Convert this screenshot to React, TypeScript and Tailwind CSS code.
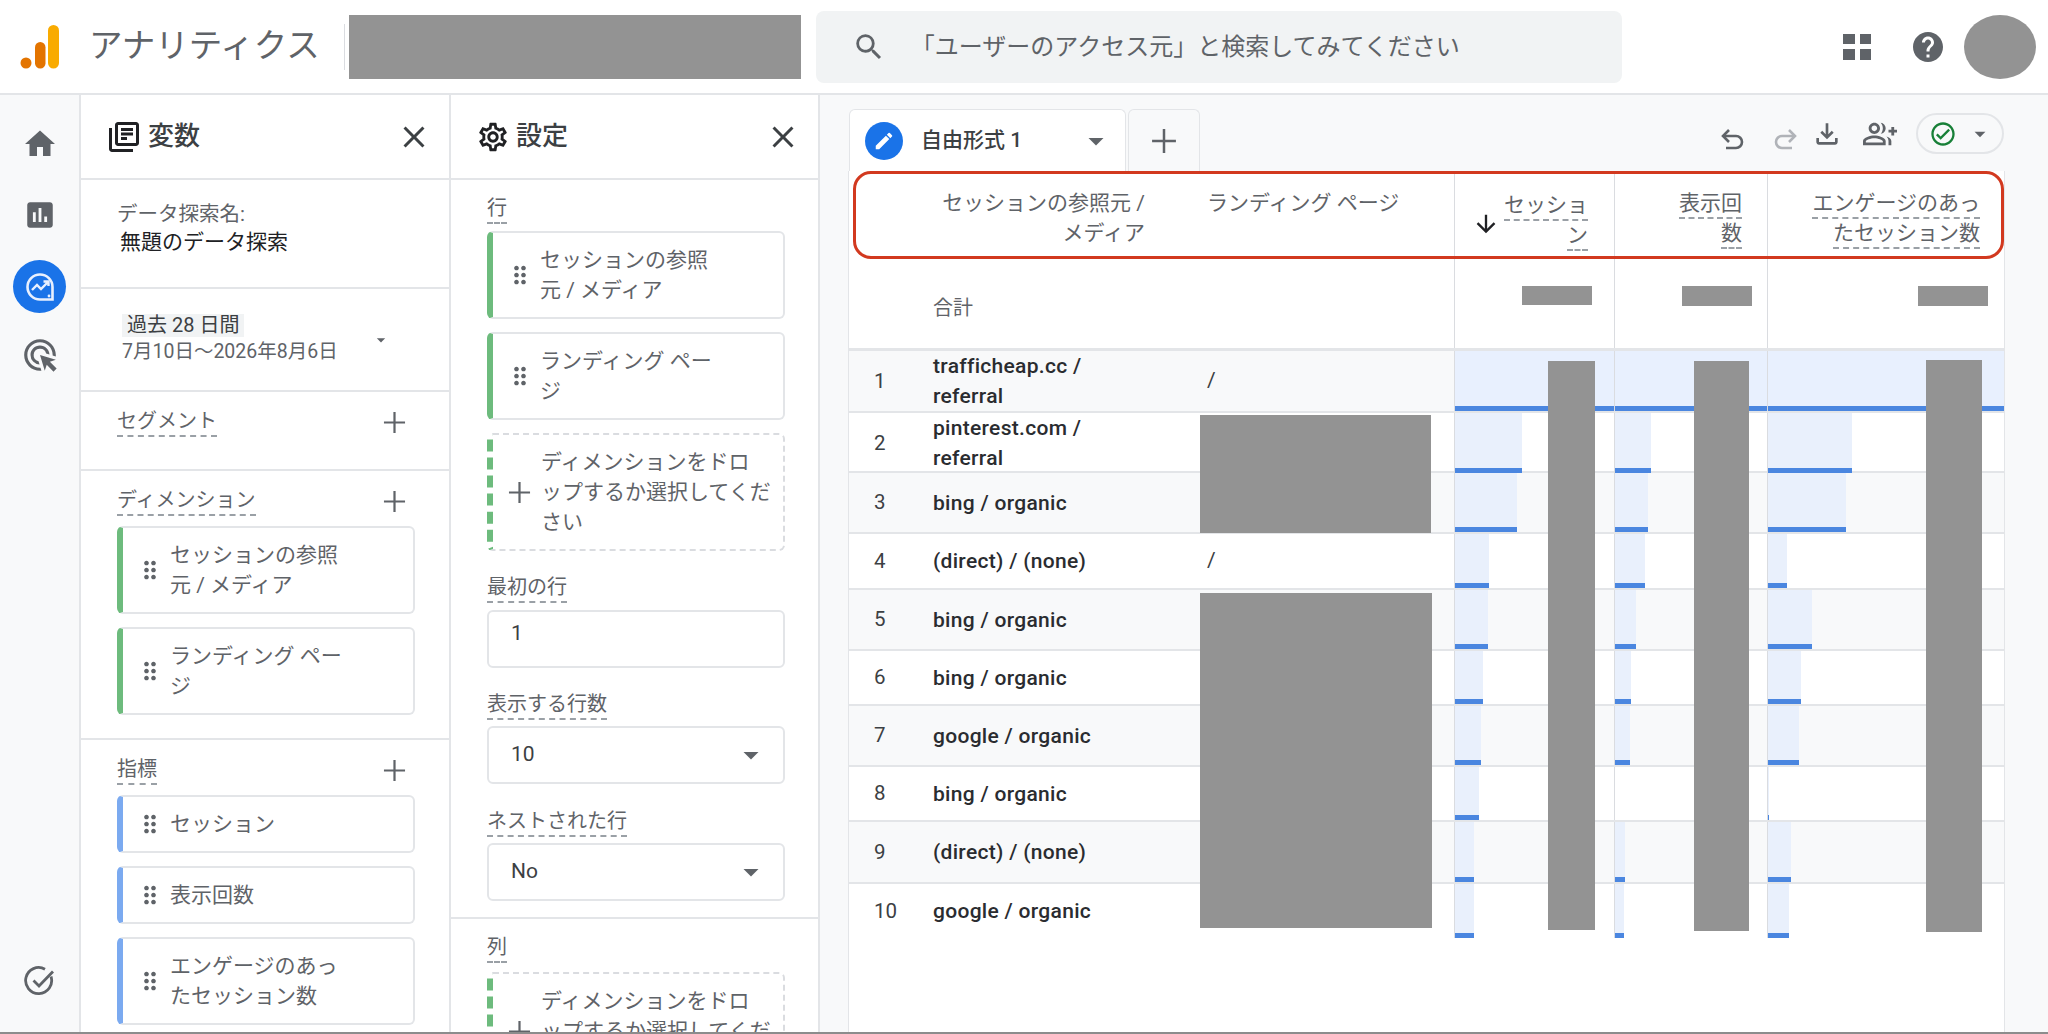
import type { ReactNode } from 'react'
import {
  MdAdsClick,
  MdArrowDownward,
  MdArrowDropDown,
  MdAssessment,
  MdClose,
  MdDragIndicator,
  MdEdit,
  MdHelp,
  MdHome,
  MdOutlineCheckCircle,
  MdOutlineFileDownload,
  MdOutlineGroupAdd,
  MdOutlineLibraryBooks,
  MdOutlineSettings,
  MdSearch
} from 'react-icons/md'

interface Row {
  no: number
  source: ReactNode
  landing?: string
  height: string
  bars: [number, number, number]
}

const ROWS: Row[] = [
  { no: 1, source: <>trafficheap.cc /<br />referral</>, landing: '/', height: 'h-[62px]', bars: [160, 153, 236] },
  { no: 2, source: <>pinterest.com /<br />referral</>, height: 'h-[60px]', bars: [67, 36, 84] },
  { no: 3, source: 'bing / organic', height: 'h-[61px]', bars: [62, 33, 78] },
  { no: 4, source: '(direct) / (none)', landing: '/', height: 'h-[56px]', bars: [34, 30, 19] },
  { no: 5, source: 'bing / organic', height: 'h-[61px]', bars: [33, 21, 44] },
  { no: 6, source: 'bing / organic', height: 'h-[55px]', bars: [28, 16, 33] },
  { no: 7, source: 'google / organic', height: 'h-[61px]', bars: [26, 15, 31] },
  { no: 8, source: 'bing / organic', height: 'h-[55px]', bars: [24, 0, 1] },
  { no: 9, source: '(direct) / (none)', height: 'h-[62px]', bars: [19, 10, 23] },
  { no: 10, source: 'google / organic', height: 'h-[54px]', bars: [19, 9, 21] }
]

const GRID = 'grid grid-cols-[76px_275px_254px_160px_153px_237px]'

function Logo() {
  return (
    <svg width="40" height="44" viewBox="0 0 40 44" className="ml-[20px] shrink-0">
      <circle cx="6" cy="38" r="5.5" fill="#e37400" />
      <rect x="15" y="17" width="10.5" height="26.5" rx="5.2" fill="#e37400" />
      <rect x="28" y="0" width="11" height="43.5" rx="5.5" fill="#f9ab00" />
    </svg>
  )
}

function ExploreIcon() {
  return (
    <div className="w-[53px] h-[53px] rounded-full bg-[#1a73e8] flex items-center justify-center">
      <svg width="32" height="32" viewBox="0 0 32 32" fill="none" stroke="#e8f0fe" strokeWidth="2.6">
        <path d="M16 3.5a12.5 12.5 0 1 0 0 25h12.5V16A12.5 12.5 0 0 0 16 3.5z" />
        <path d="M8 19l5-5 4 4 7-7M19.5 10.5H24.5V15" strokeWidth="2.4" />
        <circle cx="25" cy="25" r="1.4" fill="#e8f0fe" stroke="none" />
      </svg>
    </div>
  )
}

function CheckIcon() {
  return (
    <svg width="32" height="32" viewBox="0 0 32 32" fill="none" stroke="#5f6368" strokeWidth="2.8">
      <path d="M27 11.5A13 13 0 1 1 21 4.2" />
      <path d="M9.5 15.5l5.5 5.5L29 6.5" />
    </svg>
  )
}

function AppsIcon() {
  return (
    <div className="grid grid-cols-2 gap-[5px] w-[28px] h-[26px]">
      <div className="bg-[#5f6368]" />
      <div className="bg-[#5f6368]" />
      <div className="bg-[#5f6368]" />
      <div className="bg-[#5f6368]" />
    </div>
  )
}

function UndoIcon({ className }: { className: string }) {
  return (
    <svg width="28" height="28" viewBox="0 0 28 28" fill="none" stroke="currentColor" strokeWidth="2.6" className={className}>
      <path d="M11 4L5 10l6 6" />
      <path d="M5 10h13a5.5 5.5 0 0 1 0 12H8" />
    </svg>
  )
}

function Plus({ size, className }: { size: number; className?: string }) {
  return (
    <svg width={size} height={size} viewBox="0 0 24 24" fill="none" stroke="#5f6368" strokeWidth="2.3" className={className}>
      <path d="M12 1v22M1 12h22" />
    </svg>
  )
}

function Label({ children }: { children: ReactNode }) {
  return (
    <span className="inline-block text-[20px] leading-[28px] text-[#5f6368] border-b-2 border-dashed border-[#9aa0a6]">
      {children}
    </span>
  )
}

function SectionHead({ label }: { label: string }) {
  return (
    <div className="flex items-start justify-between pr-[27px]">
      <Label>{label}</Label>
      <Plus size={23} className="mt-[4px]" />
    </div>
  )
}

function Chip({ color, height, children }: { color: string; height: string; children: ReactNode }) {
  return (
    <div className={`flex items-center w-[298px] ${height} rounded-[6px] bg-white border-2 border-[#e3e5e8] border-l-[6px] ${color}`}>
      <MdDragIndicator className="text-[28px] text-[#5f6368] ml-[13px] shrink-0" />
      <div className="ml-[6px] text-[21px] leading-[30px] text-[#5f6368]">{children}</div>
    </div>
  )
}

function DropZone({ height }: { height: string }) {
  return (
    <div className={`flex items-center w-[298px] ${height} shrink-0 rounded-[6px] border-2 border-dashed border-[#dadce0] border-l-[6px] border-l-[#6dbb7d]`}>
      <Plus size={23} className="ml-[15px] shrink-0" />
      <div className="ml-[10px] text-[21px] leading-[30px] text-[#5f6368] whitespace-nowrap">
        ディメンションをドロ<br />ップするか選択してくだ<br />さい
      </div>
    </div>
  )
}

function Select({ value }: { value: string }) {
  return (
    <div className="flex items-center justify-between w-[298px] h-[58px] rounded-[6px] border-2 border-[#e3e5e8] bg-white pl-[22px] pr-[14px] text-[21px] text-[#3c4043]">
      {value}
      <MdArrowDropDown className="text-[36px] text-[#5f6368]" />
    </div>
  )
}

function Variables() {
  return (
    <div className="w-[370px] shrink-0 border-r-2 border-[#e3e5e8] bg-white overflow-hidden">
      <div className="h-[85px] flex items-center justify-between pl-[25px] pr-[17px] border-b-2 border-[#e3e5e8]">
        <div className="flex items-center gap-[6px] text-[26px] font-medium text-[#3c4043]">
          <MdOutlineLibraryBooks className="text-[36px] text-[#202124]" />
          変数
        </div>
        <MdClose className="text-[36px] text-[#3c4043]" />
      </div>
      <div className="h-[109px] pt-[20px] pl-[36px] border-b-2 border-[#e3e5e8]">
        <div className="text-[20.5px] leading-[28px] text-[#5f6368]">データ探索名:</div>
        <div className="text-[21px] leading-[28px] text-[#202124] ml-[3px]">無題のデータ探索</div>
      </div>
      <div className="h-[103px] flex items-center justify-between pl-[41px] pr-[58px] border-b-2 border-[#e3e5e8]">
        <div>
          <div className="w-fit px-[5px] bg-[#f1f3f4] text-[20px] leading-[23px] text-[#3c4043]">過去 28 日間</div>
          <div className="text-[19.5px] leading-[28px] text-[#5f6368] mt-[1px]">7月10日〜2026年8月6日</div>
        </div>
        <MdArrowDropDown className="text-[20px] text-[#5f6368]" />
      </div>
      <div className="h-[79px] pt-[15px] pl-[36px] pr-[16px] border-b-2 border-[#e3e5e8]">
        <SectionHead label="セグメント" />
      </div>
      <div className="h-[269px] pt-[15px] pl-[36px] pr-[16px] border-b-2 border-[#e3e5e8]">
        <SectionHead label="ディメンション" />
        <div className="flex flex-col gap-[13px] mt-[10px]">
          <Chip color="border-l-[#6dbb7d]" height="h-[88px]">セッションの参照<br />元 / メディア</Chip>
          <Chip color="border-l-[#6dbb7d]" height="h-[88px]">ランディング ペー<br />ジ</Chip>
        </div>
      </div>
      <div className="pt-[15px] pl-[36px] pr-[16px]">
        <SectionHead label="指標" />
        <div className="flex flex-col gap-[13px] mt-[10px]">
          <Chip color="border-l-[#7baaf0]" height="h-[58px]">セッション</Chip>
          <Chip color="border-l-[#7baaf0]" height="h-[58px]">表示回数</Chip>
          <Chip color="border-l-[#7baaf0]" height="h-[88px]">エンゲージのあっ<br />たセッション数</Chip>
        </div>
      </div>
    </div>
  )
}

function Settings() {
  return (
    <div className="w-[369px] shrink-0 border-r-2 border-[#e3e5e8] bg-white overflow-hidden">
      <div className="h-[85px] flex items-center justify-between pl-[25px] pr-[17px] border-b-2 border-[#e3e5e8]">
        <div className="flex items-center gap-[6px] text-[26px] font-medium text-[#3c4043]">
          <MdOutlineSettings className="text-[34px] text-[#202124]" />
          設定
        </div>
        <MdClose className="text-[36px] text-[#3c4043]" />
      </div>
      <div className="h-[739px] pl-[36px] pt-[14px] border-b-2 border-[#e3e5e8]">
        <Label>行</Label>
        <div className="flex flex-col gap-[13px] mt-[7px]">
          <Chip color="border-l-[#6dbb7d]" height="h-[88px]">セッションの参照<br />元 / メディア</Chip>
          <Chip color="border-l-[#6dbb7d]" height="h-[88px]">ランディング ペー<br />ジ</Chip>
          <DropZone height="h-[118px]" />
        </div>
        <div className="mt-[22px]"><Label>最初の行</Label></div>
        <div className="mt-[7px] w-[298px] h-[58px] rounded-[6px] border-2 border-[#e3e5e8] pl-[22px] pt-[6px] text-[21px] text-[#3c4043]">1</div>
        <div className="mt-[22px]"><Label>表示する行数</Label></div>
        <div className="mt-[6px]"><Select value="10" /></div>
        <div className="mt-[23px]"><Label>ネストされた行</Label></div>
        <div className="mt-[6px]"><Select value="No" /></div>
      </div>
      <div className="pl-[36px] pt-[14px]">
        <Label>列</Label>
        <div className="mt-[9px]"><DropZone height="h-[118px]" /></div>
      </div>
    </div>
  )
}

function HeadLine({ children }: { children: ReactNode }) {
  return (
    <span className="block w-fit ml-auto text-[21px] leading-[28px] text-[#5f6368] border-b-2 border-dashed border-[#9aa0a6]">
      {children}
    </span>
  )
}

function Bar({ width, first }: { width: number; first: boolean }) {
  return (
    <div className="h-full border-l border-[#dadce0]">
      {width > 0 && (
        <div
          className={`h-full border-b-[5px] border-[#4a86e0] ${first ? 'bg-[#e8f0fe]' : 'bg-[#e9f0fc]'}`}
          style={{ width }}
        />
      )}
    </div>
  )
}

function Table() {
  return (
    <div className="relative flex-1 w-[1155px] bg-white border-x border-[#e3e5e8] box-content -ml-px">
      <div className={`relative ${GRID} h-[88px]`}>
        <div />
        <div className="pt-[17px] pr-[55px] text-right text-[21px] leading-[30px] text-[#5f6368]">
          セッションの参照元 /<br />メディア
        </div>
        <div className="pt-[17px] pl-[7px] text-[21px] leading-[30px] text-[#5f6368]">ランディング ページ</div>
        <div className="border-l border-[#dadce0] pt-[18px] pr-[26px] flex justify-end items-center gap-[4px] pb-[6px]">
          <MdArrowDownward className="text-[28px] text-[#202124] mt-[6px]" />
          <div>
            <HeadLine>セッショ</HeadLine>
            <HeadLine>ン</HeadLine>
          </div>
        </div>
        <div className="border-l border-[#dadce0] pt-[18px] pr-[25px]">
          <HeadLine>表示回</HeadLine>
          <HeadLine>数</HeadLine>
        </div>
        <div className="border-l border-[#dadce0] pt-[18px] pr-[24px]">
          <HeadLine>エンゲージのあっ</HeadLine>
          <HeadLine>たセッション数</HeadLine>
        </div>
        <div className="absolute inset-y-0 right-0 left-[4px] border-[3px] border-[#d2391f] rounded-[18px] pointer-events-none" />
      </div>

      <div className={`${GRID} h-[92px] border-b-[3px] border-[#e3e5e8]`}>
        <div />
        <div className="pl-[8px] pt-[34px] text-[20px] text-[#5f6368]">合計</div>
        <div />
        <div className="border-l border-[#dadce0] pt-[27px] pr-[22px] flex justify-end items-start">
          <div className="w-[70px] h-[19px] bg-[#939393]" />
        </div>
        <div className="border-l border-[#dadce0] pt-[27px] pr-[15px] flex justify-end items-start">
          <div className="w-[70px] h-[20px] bg-[#939393]" />
        </div>
        <div className="border-l border-[#dadce0] pt-[27px] pr-[16px] flex justify-end items-start">
          <div className="w-[70px] h-[20px] bg-[#939393]" />
        </div>
      </div>

      <div className="relative">
        {ROWS.map((row, i) => (
          <div
            key={row.no}
            className={`${GRID} ${row.height} ${i % 2 === 0 ? 'bg-[#f8f9fa]' : 'bg-white'} ${i < 9 ? 'border-b-[2px] border-[#e3e5e8]' : ''}`}
          >
            <div className="pl-[25px] flex items-center text-[20.5px] text-[#3c4043]">{row.no}</div>
            <div className="pl-[8px] flex items-center text-[21px] leading-[30px] font-medium tracking-[0.3px] text-[#2a2c30]">
              <div>{row.source}</div>
            </div>
            <div className="pl-[7px] flex items-center text-[21px] text-[#3c4043]">{row.landing}</div>
            {row.bars.map((width, j) => (
              <Bar key={j} width={width} first={i === 0} />
            ))}
          </div>
        ))}
        <div className="absolute left-[351px] top-[64px] w-[231px] h-[118px] bg-[#939393]" />
        <div className="absolute left-[351px] top-[242px] w-[232px] h-[335px] bg-[#939393]" />
        <div className="absolute left-[699px] top-[10px] w-[47px] h-[569px] bg-[#939393]" />
        <div className="absolute left-[845px] top-[10px] w-[55px] h-[570px] bg-[#939393]" />
        <div className="absolute left-[1077px] top-[9px] w-[56px] h-[572px] bg-[#939393]" />
      </div>
    </div>
  )
}

function Main() {
  return (
    <div className="flex-1 flex flex-col bg-[#f8f9fa] pl-[29px] min-w-0">
      <div className="h-[76px] flex items-end w-[1155px] shrink-0">
        <div className="w-[277px] h-[62px] flex items-center bg-white rounded-t-[6px] border-x border-t border-[#e3e5e8] pl-[15px]">
          <div className="w-[38px] h-[38px] rounded-full bg-[#1a73e8] flex items-center justify-center">
            <MdEdit className="text-[22px] text-white" />
          </div>
          <span className="ml-[18px] text-[21px] font-medium text-[#3c4043]">自由形式 1</span>
          <MdArrowDropDown className="text-[36px] text-[#5f6368] ml-[56px]" />
        </div>
        <div className="ml-[2px] w-[72px] h-[62px] flex items-center justify-center bg-[#f8f9fa] rounded-t-[6px] border-x border-t border-[#e3e5e8]">
          <Plus size={26} />
        </div>
        <div className="flex-1 flex items-center justify-end self-start mt-[18px] text-[#5f6368]">
          <UndoIcon className="mt-[12px]" />
          <UndoIcon className="text-[#b0b3b8] ml-[26px] mt-[12px] -scale-x-100" />
          <MdOutlineFileDownload className="text-[32px] ml-[11px]" />
          <MdOutlineGroupAdd className="text-[34px] ml-[20px]" />
          <div className="ml-[19px] w-[88px] h-[41px] rounded-full border-2 border-[#e3e5e8] flex items-center pl-[11px]">
            <MdOutlineCheckCircle className="text-[28px] text-[#188038]" />
            <MdArrowDropDown className="text-[26px] ml-[10px]" />
          </div>
        </div>
      </div>
      <Table />
    </div>
  )
}

export default function App() {
  return (
    <div className="h-[1034px] flex flex-col overflow-hidden bg-white border-b-2 border-[#8c8c8c] font-['Roboto','Noto_Sans_CJK_JP',sans-serif]">
      <header className="h-[95px] shrink-0 flex items-center border-b-2 border-[#e3e5e8] bg-white">
        <Logo />
        <span className="ml-[29px] text-[33.5px] text-[#5f6368]">アナリティクス</span>
        <div className="ml-[24px] w-px h-[46px] bg-[#dadce0]" />
        <div className="ml-[4px] w-[452px] h-[64px] bg-[#939393]" />
        <div className="ml-[15px] w-[806px] h-[72px] rounded-[8px] bg-[#f1f3f4] flex items-center pl-[36px]">
          <MdSearch className="text-[34px] text-[#5f6368]" />
          <span className="ml-[25px] text-[24px] text-[#5f6368]">「ユーザーのアクセス元」と検索してみてください</span>
        </div>
        <div className="ml-auto flex items-center">
          <AppsIcon />
          <MdHelp className="ml-[39px] text-[36px] text-[#5f6368]" />
          <div className="ml-[18px] mr-[12px] w-[72px] h-[64px] rounded-[50%] bg-[#939393]" />
        </div>
      </header>
      <div className="flex-1 flex min-h-0">
        <nav className="w-[81px] shrink-0 bg-[#f8f9fa] border-r-2 border-[#e3e5e8] flex flex-col items-center text-[#5f6368]">
          <MdHome className="text-[36px] mt-[31px]" />
          <MdAssessment className="text-[34px] mt-[36px]" />
          <div className="mt-[28px]"><ExploreIcon /></div>
          <MdAdsClick className="text-[38px] mt-[23px]" />
          <div className="mt-auto mb-[35px]"><CheckIcon /></div>
        </nav>
        <Variables />
        <Settings />
        <Main />
      </div>
    </div>
  )
}
